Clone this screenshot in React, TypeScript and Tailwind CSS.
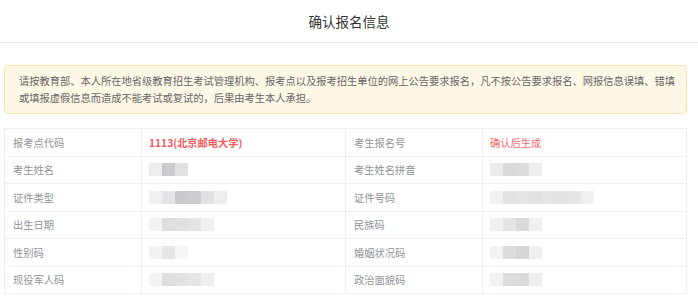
import React from "react";

// mosaic blocks standing in for the blurred personal data
type Block = string;

interface Row {
  label1: string;
  value1?: React.ReactNode;
  mosaic1?: Block[];
  label2: string;
  value2?: React.ReactNode;
  mosaic2?: Block[];
}

const rows: Row[] = [
  {
    label1: "报考点代码",
    value1: <span className="font-bold text-[#f25a5a]">1113(北京邮电大学)</span>,
    label2: "考生报名号",
    value2: <span className="text-[#f56c6c]">确认后生成</span>,
  },
  {
    label1: "考生姓名",
    mosaic1: ["bg-[#ededef]", "bg-[#cbcbcf]", "bg-[#e0e0e3]"],
    label2: "考生姓名拼音",
    mosaic2: ["bg-[#ececee]", "bg-[#d9d9dc]", "bg-[#dcdcdf]", "bg-[#eeeeef]"],
  },
  {
    label1: "证件类型",
    mosaic1: ["bg-[#f0f0f1]", "bg-[#e3e3e5]", "bg-[#cacace]", "bg-[#cdcdd1]", "bg-[#e1e1e3]", "bg-[#ededef]"],
    label2: "证件号码",
    mosaic2: ["bg-[#f1f1f2]", "bg-[#e2e2e5]", "bg-[#e4e4e6]", "bg-[#e1e1e4]", "bg-[#e4e4e6]", "bg-[#e3e3e5]", "bg-[#e6e6e8]", "bg-[#f0f0f1]"],
  },
  {
    label1: "出生日期",
    mosaic1: ["bg-[#f2f2f3]", "bg-[#dededf]", "bg-[#e1e1e3]", "bg-[#e4e4e6]", "bg-[#f1f1f2]"],
    label2: "民族码",
    mosaic2: ["bg-[#f1f1f2]", "bg-[#e4e4e6]", "bg-[#dadadd]", "bg-[#f0f0f1]"],
  },
  {
    label1: "性别码",
    mosaic1: ["bg-[#f2f2f3]", "bg-[#e6e6e8]", "bg-[#f6f6f7]"],
    label2: "婚姻状况码",
    mosaic2: ["bg-[#f2f2f3]", "bg-[#dcdcdf]", "bg-[#d6d6d9]", "bg-[#f0f0f1]"],
  },
  {
    label1: "现役军人码",
    mosaic1: ["bg-[#f3f3f4]", "bg-[#dfdfe2]", "bg-[#e2e2e4]", "bg-[#e6e6e8]", "bg-[#eeeeef]"],
    label2: "政治面貌码",
    mosaic2: ["bg-[#f2f2f3]", "bg-[#dcdcdf]", "bg-[#dadadd]", "bg-[#eeeef0]"],
  },
];

const Mosaic = ({ blocks }: { blocks: Block[] }) => (
  <div className="flex">
    {blocks.map((c, i) => (
      <div key={i} className={`h-[13px] w-[13px] ${c}`} />
    ))}
  </div>
);

const Label = ({ text }: { text: string }) => (
  <div className="flex items-center border-r border-[#ebeef5] pl-[8px] text-[#909399]">{text}</div>
);

const Value = ({ value, mosaic, last }: { value?: React.ReactNode; mosaic?: Block[]; last?: boolean }) => (
  <div className={`flex items-center pl-[7px] ${last ? "" : "border-r border-[#ebeef5]"}`}>
    {value}
    {mosaic && <Mosaic blocks={mosaic} />}
  </div>
);

export default function App() {
  return (
    <div
      className="h-[296px] w-[698px] overflow-hidden bg-white text-[10.25px]"
      style={{ fontFamily: '"Noto Sans CJK SC", "Noto Sans", sans-serif' }}
    >
      <div className="flex h-[43px] items-center justify-center border-b border-[#e8e8e8] text-[13.5px] text-[#333]">
        确认报名信息
      </div>

      <div className="ml-[4px] w-[683px]">
        <div className="mt-[22px] rounded-[4px] border border-[#fbe2a8] bg-[#fef8e6] py-[7px] pl-[14px] pr-[8px] leading-[16.5px] text-[#666]">
          <div className="whitespace-nowrap">
            请按教育部、本人所在地省级教育招生考试管理机构、报考点以及报考招生单位的网上公告要求报名，凡不按公告要求报名、网报信息误填、错填
          </div>
          <div className="whitespace-nowrap">或填报虚假信息而造成不能考试或复试的，后果由考生本人承担。</div>
        </div>

        <div className="mt-[14px] border-x border-t border-[#ebeef5]">
          {rows.map((r) => (
            <div
              key={r.label1}
              className="grid h-[27.5px] grid-cols-[137px_204px_137px_1fr] border-b border-[#ebeef5]"
            >
              <Label text={r.label1} />
              <Value value={r.value1} mosaic={r.mosaic1} />
              <Label text={r.label2} />
              <Value value={r.value2} mosaic={r.mosaic2} last />
            </div>
          ))}
        </div>
      </div>
    </div>
  );
}
